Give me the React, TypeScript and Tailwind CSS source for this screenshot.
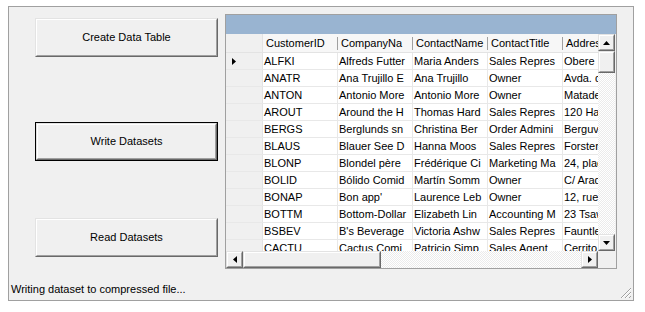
import React from "react";

const font = "font-['Liberation_Sans',Arial,sans-serif]";

const columns = ["CustomerID", "CompanyNa", "ContactName", "ContactTitle", "Address"];

const rows = [
  ["ALFKI", "Alfreds Futter", "Maria Anders", "Sales Repres", "Obere Str. 57"],
  ["ANATR", "Ana Trujillo E", "Ana Trujillo", "Owner", "Avda. de la Constitución 2222"],
  ["ANTON", "Antonio More", "Antonio More", "Owner", "Mataderos 2312"],
  ["AROUT", "Around the H", "Thomas Hard", "Sales Repres", "120 Hanover Sq."],
  ["BERGS", "Berglunds sn", "Christina Ber", "Order Admini", "Berguvsvägen 8"],
  ["BLAUS", "Blauer See D", "Hanna Moos", "Sales Repres", "Forsterstr. 57"],
  ["BLONP", "Blondel père", "Frédérique Ci", "Marketing Ma", "24, place Kléber"],
  ["BOLID", "Bólido Comid", "Martín Somm", "Owner", "C/ Araquil, 67"],
  ["BONAP", "Bon app'", "Laurence Leb", "Owner", "12, rue des Bouchers"],
  ["BOTTM", "Bottom-Dollar", "Elizabeth Lin", "Accounting M", "23 Tsawassen Blvd."],
  ["BSBEV", "B's Beverage", "Victoria Ashw", "Sales Repres", "Fauntleroy Circus"],
  ["CACTU", "Cactus Comi", "Patricio Simp", "Sales Agent", "Cerrito 333"],
];

function Raised({ className = "", children }: { className?: string; children?: React.ReactNode }) {
  return (
    <div className={`border border-t-[#e3e3e3] border-l-[#e3e3e3] border-r-[#696969] border-b-[#696969] bg-[#f0f0f0] ${className}`}>
      <div className="w-full h-full border border-t-white border-l-white border-r-[#a0a0a0] border-b-[#a0a0a0] flex items-center justify-center">
        {children}
      </div>
    </div>
  );
}

function Arrow({ dir }: { dir: "up" | "down" | "left" | "right" }) {
  const pts = {
    up: "0,4 7,4 3.5,0",
    down: "0,0 7,0 3.5,4",
    left: "4,0 4,7 0,3.5",
    right: "0,0 0,7 4,3.5",
  }[dir];
  const vert = dir === "up" || dir === "down";
  return (
    <svg width={vert ? 7 : 4} height={vert ? 4 : 7} viewBox={vert ? "0 0 7 4" : "0 0 4 7"}>
      <polygon points={pts} fill="#000" />
    </svg>
  );
}

const track = "bg-[image:repeating-conic-gradient(#ffffff_0%_25%,#ebebeb_0%_50%)] bg-[length:2px_2px]";

function WinButton({ label, focused }: { label: string; focused?: boolean }) {
  const inner = (
    <Raised className="w-full h-full">
      <span className="text-[11px] text-black">{label}</span>
    </Raised>
  );
  if (focused) {
    return <div className="w-[183px] h-[39px] border border-black">{inner}</div>;
  }
  return <div className="w-[183px] h-[39px]">{inner}</div>;
}

function Grid() {
  return (
    <div className="ml-[7px] mt-[7px] w-[392px] h-[255px] border border-[#a0a0a0] bg-[#f0f0f0] flex flex-col">
      <div className="h-[19px] bg-[#99b4d1] shrink-0" />
      <div className="flex h-[234px]">
        <div className="w-[372px] flex flex-col">
          <div className="h-[217px] overflow-hidden bg-white">
            <div className="flex h-[19px] bg-[#f7f7f7] border-b border-[#e3e3e3] w-max">
              <div className="w-[37px] shrink-0 border-r border-[#e3e3e3] bg-[#f0f0f0]" />
              {columns.map((c) => (
                <div key={c} className="w-[75px] shrink-0 pl-[3px] leading-[18px] text-[11px] text-black overflow-hidden whitespace-nowrap relative">
                  {c}
                  <div className="absolute right-0 top-[3px] bottom-[2px] w-px bg-[#a0a0a0]" />
                </div>
              ))}
            </div>
            {rows.map((r, i) => (
              <div key={r[0]} className="flex h-[17px] border-b border-[#e8e8e8] w-max">
                <div className="w-[37px] shrink-0 border-r border-[#e3e3e3] bg-[#f0f0f0] flex items-center pl-[6px]">
                  {i === 0 && <Arrow dir="right" />}
                </div>
                {r.map((cell, j) => (
                  <div key={j} className="w-[75px] shrink-0 pl-[1px] leading-[16px] text-[11px] text-black overflow-hidden whitespace-nowrap border-r border-[#e8e8e8]">
                    {cell}
                  </div>
                ))}
              </div>
            ))}
          </div>
          <div className="h-[17px] flex">
            <Raised className="w-[17px] h-[17px] shrink-0">
              <Arrow dir="left" />
            </Raised>
            <Raised className="w-[138px] h-[17px] shrink-0" />
            <div className={`flex-1 ${track}`} />
            <Raised className="w-[17px] h-[17px] shrink-0">
              <Arrow dir="right" />
            </Raised>
          </div>
        </div>
        <div className="w-[18px] flex flex-col">
          <div className="w-[17px] h-[217px] flex flex-col">
            <Raised className="w-[17px] h-[17px] shrink-0">
              <Arrow dir="up" />
            </Raised>
            <Raised className="w-[17px] h-[22px] shrink-0" />
            <div className={`flex-1 ${track}`} />
            <Raised className="w-[17px] h-[17px] shrink-0">
              <Arrow dir="down" />
            </Raised>
          </div>
          <div className="h-[17px] bg-[#f0f0f0]" />
        </div>
      </div>
    </div>
  );
}

export default function App() {
  return (
    <div className={`w-[645px] h-[312px] bg-white pt-[6px] pl-[8px] ${font}`}>
      <div className="relative w-[626px] h-[295px] border border-[#a0a0a0] bg-[#f0f0f0] flex flex-col">
        <div className="flex items-start">
          <div className="ml-[26px] mt-[11px] flex flex-col">
            <WinButton label="Create Data Table" />
            <div className="mt-[65px]">
              <WinButton label="Write Datasets" focused />
            </div>
            <div className="mt-[57px]">
              <WinButton label="Read Datasets" />
            </div>
          </div>
          <Grid />
        </div>
        <div className="mt-[14px] pl-[2px] text-[11px] leading-[13px] text-black">Writing dataset to compressed file...</div>
        <svg className="absolute right-[1px] bottom-[1px]" width="12" height="12" viewBox="0 0 12 12">
          <g strokeWidth="1">
            <line x1="11" y1="1" x2="1" y2="11" stroke="#a0a0a0" />
            <line x1="11" y1="2" x2="2" y2="11" stroke="#ffffff" />
            <line x1="11" y1="5" x2="5" y2="11" stroke="#a0a0a0" />
            <line x1="11" y1="6" x2="6" y2="11" stroke="#ffffff" />
            <line x1="11" y1="9" x2="9" y2="11" stroke="#a0a0a0" />
          </g>
        </svg>
      </div>
    </div>
  );
}
